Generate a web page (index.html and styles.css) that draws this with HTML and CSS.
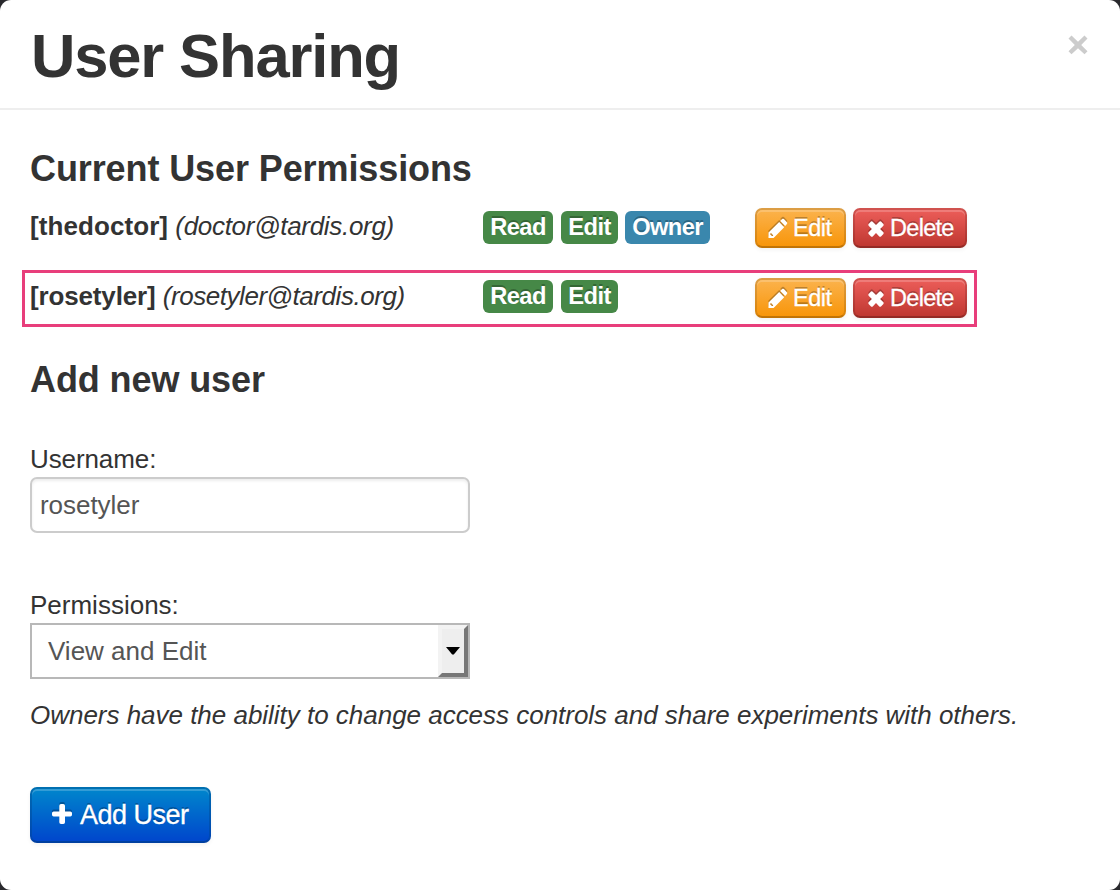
FILE: index.html
```html
<!DOCTYPE html>
<html lang="en">
<head>
<meta charset="utf-8">
<title>User Sharing</title>
<link rel="stylesheet" href="styles.css">
</head>
<body>
<svg class="sprite" aria-hidden="true">
  <symbol id="pencil" viewBox="0 0 20 22">
    <path fill-rule="evenodd" d="M.5 14.5 11.200 4l5 5.200L5.600 20H.5zM12.200 3l1.900-1.900q.9-.8 1.800 0l3 3.200q.8.900 0 1.800l-1.700 2zM2.200 15.700v1.100h1.200v1.300h1.200l.7-.7-2.200-2.300z"/>
  </symbol>
  <symbol id="times" viewBox="0 0 16 16">
    <path d="M.6 3 3 .6Q4 0 4.700.700L8 4 11.300.700Q12 0 13 .6L15.400 3q.6.900 0 1.700L12.100 8l3.300 3.300q.6.800 0 1.700L13 15.400q-1 .6-1.700 0L8 12l-3.300 3.400q-.7.600-1.700 0L.6 13q-.6-.9 0-1.700L3.900 8 .6 4.700Q0 3.900.6 3z"/>
  </symbol>
  <symbol id="plus" viewBox="0 0 20 20">
    <path d="M9 0h2.200Q13 0 13 1.700V7.500h5.300Q20 7.500 20 9v1.700q0 1.800-1.700 1.800H13v5.800q0 1.700-1.700 1.700H9q-1.700 0-1.700-1.700v-5.800H1.700Q0 12.500 0 10.700V9Q0 7.500 1.700 7.500h5.600V1.700Q7.300 0 9 0z"/>
  </symbol>
  <symbol id="close" viewBox="0 0 20 20">
    <path d="M3.500.5 10 6.800 16.500.5l3 3L13.200 10l6.300 6.200-3 3.100L10 13.200l-6.500 6.100-3-3.100L6.800 10 .5 3.500z"/>
  </symbol>
</svg>
<main class="modal">
  <header class="modal-header">
    <h1 class="title">User Sharing</h1>
    <button class="close" aria-label="Close"><svg class="close-icon"><use href="#close"/></svg></button>
  </header>
  <section class="modal-body">
    <h2 class="subtitle">Current User Permissions</h2>
    <div class="user-row">
      <div class="user"><strong class="name">[thedoctor]</strong> <em class="mail doctor">(doctor@tardis.org)</em></div>
      <div class="labels"><span class="label read">Read</span><span class="label edit">Edit</span><span class="label owner">Owner</span></div>
      <div class="actions">
        <button class="btn warning"><svg class="pencil"><use href="#pencil"/></svg><span>Edit</span></button>
        <button class="btn danger"><svg class="times"><use href="#times"/></svg><span>Delete</span></button>
      </div>
    </div>
    <div class="user-row highlighted">
      <div class="user"><strong class="name rose">[rosetyler]</strong> <em class="mail">(rosetyler@tardis.org)</em></div>
      <div class="labels"><span class="label read">Read</span><span class="label edit">Edit</span></div>
      <div class="actions">
        <button class="btn warning"><svg class="pencil"><use href="#pencil"/></svg><span>Edit</span></button>
        <button class="btn danger"><svg class="times"><use href="#times"/></svg><span>Delete</span></button>
      </div>
    </div>
    <h2 class="subtitle add">Add new user</h2>
    <label class="field-label" for="username">Username:</label>
    <input class="text-input" id="username" value="rosetyler">
    <span class="field-label permissions">Permissions:</span>
    <div class="select"><span class="select-value">View and Edit</span><span class="select-button"><svg class="arrow" viewBox="0 0 14 8"><path d="M0 0h14L7.800 7.400H6.200z"/></svg></span></div>
    <p class="help">Owners have the ability to change access controls and share experiments with others.</p>
    <button class="btn primary"><svg class="plus"><use href="#plus"/></svg><span>Add User</span></button>
  </section>
</main>
</body>
</html>
```
FILE: styles.css
```css
* { box-sizing: border-box; }
body { margin: 0; background: #29292d; color: #333; font: 26px/40px "Liberation Sans", Arial, sans-serif; white-space: nowrap; }
.sprite { display: none; }
button { font: inherit; }
.modal { height: 890px; background: #fff; border-radius: 11px; overflow: hidden; }
.modal-header { height: 110px; padding: 16px 30px 0; border-bottom: 2px solid #eee; display: flex; justify-content: space-between; }
.title { margin: 0; font-size: 61.5px; line-height: 80px; letter-spacing: -1.15px; padding-left: 1px; }
.close { align-self: flex-start; margin: 19px 2px 0 0; padding: 0; border: 0; background: none; line-height: 0; }
.close-icon { width: 20px; height: 20px; fill: #ccc; }
.modal-body { padding: 38px 30px 0; }
.subtitle { margin: 0; font-size: 36px; line-height: 40px; padding-top: 1px; height: 60px; letter-spacing: -.1px; }
.user-row { display: grid; grid-template-columns: 453px 272px 212px; height: 40px; align-items: start; }
.user { line-height: 37px; }
.name { letter-spacing: .08px; }
.name.rose { letter-spacing: -.15px; }
.mail { letter-spacing: -.45px; }
.mail.doctor { letter-spacing: -.3px; }
.labels { display: flex; gap: 8px; padding-top: 3px; }
.label { height: 33px; border-radius: 6px; background: #468847; color: #fff; font-size: 23.7px; letter-spacing: -.6px; font-weight: bold; line-height: 33px; text-align: center; text-shadow: 0 -2px 0 rgba(0,0,0,.25); }
.read { width: 70px; }
.edit { width: 57px; }
.owner { width: 85px; margin-left: -1px; background: #3a87ad; }
.actions { display: flex; gap: 7px; }
.btn { display: flex; align-items: center; padding: 0 0 0 11px; height: 40px; color: #fff; border: 2px solid; border-color: rgba(0,0,0,.12) rgba(0,0,0,.12) rgba(0,0,0,.22); border-radius: 7px; background-clip: border-box; background-origin: border-box; box-shadow: inset 0 2px 0 rgba(255,255,255,.2), 0 2px 4px rgba(0,0,0,.05); font-size: 23.5px; line-height: 36px; letter-spacing: -.7px; text-shadow: 0 -2px 0 rgba(0,0,0,.25); -webkit-text-stroke: .3px #fff; }
.btn svg { flex: none; fill: #fff; filter: drop-shadow(0 -2px 0 rgba(0,0,0,.25)); }
.warning { width: 91px; background-image: linear-gradient(#fbb450, #f89406); }
.danger { width: 114px; padding-left: 13px; background-image: linear-gradient(#ee5f5b, #bd362f); }
.pencil { width: 20px; height: 22px; margin-right: 5px; margin-top: 2px; }
.warning span { letter-spacing: -.45px; }
.times { width: 16px; height: 16px; margin-right: 6px; margin-top: 1px; }
.highlighted { width: 955px; height: 57px; margin: 22px 0 0 -8px; padding: 5px 5px 0; border: 3px solid #e83e7b; }
.highlighted .labels { padding-top: 2px; }
.add { height: 80px; padding-top: 33px; }
.field-label { display: block; height: 40px; margin-top: 32px; line-height: 40px; letter-spacing: -.1px; }
.text-input { display: block; width: 440px; height: 56px; margin-top: -2px; padding: 0 8px; border: 2px solid #ccc; border-radius: 7px; color: #555; font: inherit; letter-spacing: -.05px; box-shadow: inset 0 2px 3px rgba(0,0,0,.075); }
.permissions { margin-top: 52px; letter-spacing: 0; }
.select { display: flex; justify-content: space-between; width: 440px; height: 56px; margin-top: -2px; border: 2px solid #b8b8b8; color: #555; }
.select-value { padding-left: 16px; line-height: 52px; }
.select-button { width: 30px; background: #eee; border: 4px solid; border-color: #f3f3f3 #777 #777 #f3f3f3; display: flex; align-items: center; justify-content: center; }
.arrow { width: 14px; height: 8px; }
.help { margin: 16px 0 52px; font-style: italic; letter-spacing: -.02px; }
.primary { width: 181px; height: 56px; padding-left: 20px; font-size: 27px; letter-spacing: -.5px; border-color: rgba(0,80,140,.4) rgba(0,70,140,.4) rgba(0,60,130,.6); background-image: linear-gradient(#08c, #04c); }
.plus { width: 20px; height: 20px; margin-right: 8px; margin-bottom: 2px; }
```
